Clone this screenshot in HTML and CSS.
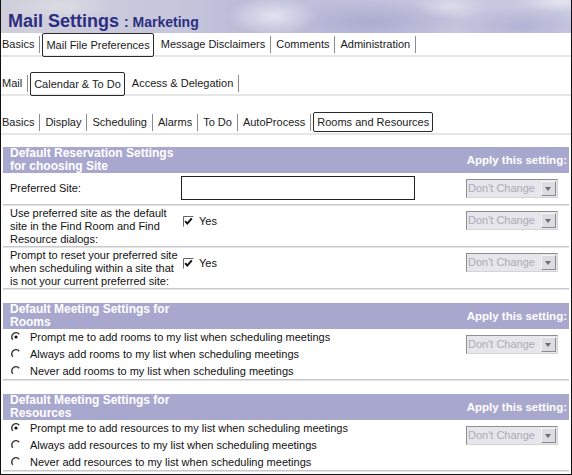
FILE: index.html
```html
<!DOCTYPE html>
<html lang="en-us">
<head>
    <meta charset="UTF-8">
    <meta name="viewport" content="width=device-width, initial-scale=1.0">
    <title>Mail Settings : Marketing</title>
    <link rel="stylesheet" href="styles.css">
</head>
<body>
<div class="page">
    <header class="banner">
        <h1>Mail Settings <span class="banner-sub">: Marketing</span></h1>
    </header>

    <nav class="tabs tabs-top">
        <a class="tab first">Basics</a>
        <a class="tab active">Mail File Preferences</a>
        <a class="tab">Message Disclaimers</a>
        <a class="tab">Comments</a>
        <a class="tab">Administration</a>
    </nav>

    <nav class="tabs tabs-mid">
        <a class="tab first">Mail</a>
        <a class="tab active">Calendar &amp; To Do</a>
        <a class="tab">Access &amp; Delegation</a>
    </nav>

    <nav class="tabs tabs-sub">
        <a class="tab first">Basics</a>
        <a class="tab">Display</a>
        <a class="tab">Scheduling</a>
        <a class="tab">Alarms</a>
        <a class="tab">To Do</a>
        <a class="tab">AutoProcess</a>
        <a class="tab active">Rooms and Resources</a>
    </nav>

    <!-- reservation settings -->
    <section class="group group-first">
        <div class="group-head">
            <h2>Default Reservation Settings for choosing Site</h2>
            <span class="apply-title">Apply this setting:</span>
        </div>

        <div class="row row-site">
            <div class="label">Preferred Site:</div>
            <div class="value"><input class="text-input" type="text"></div>
            <div class="apply"><div class="dropdown"><span>Don't Change</span><i class="dropdown-btn"></i></div></div>
        </div>

        <div class="row">
            <div class="label">Use preferred site as the default site in the Find Room and Find Resource dialogs:</div>
            <div class="value value-check">
                <svg class="check" width="11" height="11" viewBox="0 0 11 11"><path d="M0.5 10.5V0.5H10.5" fill="none" stroke="#666" stroke-width="1"/><path d="M2.2 5.2L4.3 7.6L8.8 2.4" fill="none" stroke="#111" stroke-width="2"/></svg>
                Yes
            </div>
            <div class="apply"><div class="dropdown"><span>Don't Change</span><i class="dropdown-btn"></i></div></div>
        </div>

        <div class="row">
            <div class="label">Prompt to reset your preferred site when scheduling within a site that is not your current preferred site:</div>
            <div class="value value-check">
                <svg class="check" width="11" height="11" viewBox="0 0 11 11"><path d="M0.5 10.5V0.5H10.5" fill="none" stroke="#666" stroke-width="1"/><path d="M2.2 5.2L4.3 7.6L8.8 2.4" fill="none" stroke="#111" stroke-width="2"/></svg>
                Yes
            </div>
            <div class="apply"><div class="dropdown"><span>Don't Change</span><i class="dropdown-btn"></i></div></div>
        </div>
    </section>

    <!-- rooms -->
    <section class="group">
        <div class="group-head">
            <h2>Default Meeting Settings for Rooms</h2>
            <span class="apply-title">Apply this setting:</span>
        </div>
        <div class="row row-radios">
            <div class="radios">
                <div class="radio checked"><svg width="10" height="10" viewBox="0 0 10 10"><path d="M8.2 2.2A4.2 4.2 0 0 0 1.8 7.8" fill="none" stroke="#333" stroke-width="1.4"/><circle cx="5" cy="5" r="1.6" fill="#111"/></svg>Prompt me to add rooms to my list when scheduling meetings</div>
                <div class="radio"><svg width="10" height="10" viewBox="0 0 10 10"><path d="M8.2 2.2A4.2 4.2 0 0 0 1.8 7.8" fill="none" stroke="#333" stroke-width="1.4"/></svg>Always add rooms to my list when scheduling meetings</div>
                <div class="radio"><svg width="10" height="10" viewBox="0 0 10 10"><path d="M8.2 2.2A4.2 4.2 0 0 0 1.8 7.8" fill="none" stroke="#333" stroke-width="1.4"/></svg>Never add rooms to my list when scheduling meetings</div>
            </div>
            <div class="apply"><div class="dropdown"><span>Don't Change</span><i class="dropdown-btn"></i></div></div>
        </div>
    </section>

    <!-- resources -->
    <section class="group">
        <div class="group-head">
            <h2>Default Meeting Settings for Resources</h2>
            <span class="apply-title">Apply this setting:</span>
        </div>
        <div class="row row-radios">
            <div class="radios">
                <div class="radio checked"><svg width="10" height="10" viewBox="0 0 10 10"><path d="M8.2 2.2A4.2 4.2 0 0 0 1.8 7.8" fill="none" stroke="#333" stroke-width="1.4"/><circle cx="5" cy="5" r="1.6" fill="#111"/></svg>Prompt me to add resources to my list when scheduling meetings</div>
                <div class="radio"><svg width="10" height="10" viewBox="0 0 10 10"><path d="M8.2 2.2A4.2 4.2 0 0 0 1.8 7.8" fill="none" stroke="#333" stroke-width="1.4"/></svg>Always add resources to my list when scheduling meetings</div>
                <div class="radio"><svg width="10" height="10" viewBox="0 0 10 10"><path d="M8.2 2.2A4.2 4.2 0 0 0 1.8 7.8" fill="none" stroke="#333" stroke-width="1.4"/></svg>Never add resources to my list when scheduling meetings</div>
            </div>
            <div class="apply"><div class="dropdown"><span>Don't Change</span><i class="dropdown-btn"></i></div></div>
        </div>
    </section>
</div>
</body>
</html>
```

FILE: styles.css
```css
html, body {
    margin: 0;
    padding: 0;
    background: #fff;
}

body {
    font-family: "Liberation Sans", Arial, sans-serif;
    font-size: 11px;
    color: #111;
}

.page {
    width: 570px;
    height: 474px;
    border: 1px solid #111;
    border-top: none;
    overflow: hidden;
}

/* banner */
.banner {
    height: 33px;
    background-color: #c8c8de;
    background-image:
        radial-gradient(ellipse 60px 26px at 272px 16px, #e2e2ef, rgba(226,226,239,0) 75%),
        radial-gradient(ellipse 120px 30px at 370px 22px, #acacd1, rgba(172,172,209,0) 75%),
        radial-gradient(ellipse 50px 18px at 450px 6px, #dcdcec, rgba(220,220,236,0) 75%),
        radial-gradient(ellipse 90px 26px at 520px 26px, #b2b2d5, rgba(178,178,213,0) 75%),
        radial-gradient(ellipse 60px 14px at 560px 2px, #e4e4f0, rgba(228,228,240,0) 75%),
        radial-gradient(ellipse 70px 20px at 60px 6px, #dcdce4, rgba(220,220,228,0) 75%),
        linear-gradient(90deg, #d0d0dc 0%, #c6c6dc 30%, #bcbcd8 42%, #cacae0 100%);
}

.banner h1 {
    margin: 0;
    padding: 11px 0 0 7px;
    font-size: 18px;
    line-height: 20px;
    color: #2c2f80;
    font-weight: bold;
}

.banner-sub {
    font-size: 14px;
}

/* tabs */
.tabs {
    display: flex;
    align-items: center;
    height: 22px;
    border-bottom: 2px solid #e6e6e6;
}

.tabs-mid,
.tabs-sub {
    margin-top: 15px;
}

.tab {
    padding: 0 5px;
    line-height: 17px;
    border-right: 1px solid #8a8a8a;
    color: #1a1a1a;
    white-space: nowrap;
}

.tab.first {
    padding-left: 1px;
}

.tab.active {
    align-self: flex-start;
    height: 22px;
    line-height: 22px;
    padding: 0 3px;
    margin: 0 2px;
    border: 1.5px solid #2a2a2a;
    border-radius: 2px;
}

.tabs-sub .tab.active {
    height: 18px;
    line-height: 18px;
    margin-top: 1px;
}

/* groups */
.group {
    margin: 14px 2px 0 2px;
}

.group-first {
    margin-top: 12px;
}

.group-head {
    display: flex;
    align-items: center;
    justify-content: space-between;
    height: 26px;
    background: #a8a8cf;
    color: #fff;
}

.group-head h2 {
    margin: 0;
    width: 168px;
    padding-left: 7px;
    font-size: 12px;
    line-height: 13px;
    font-weight: bold;
}

.apply-title {
    font-size: 11.5px;
    font-weight: bold;
    padding-right: 2px;
}

.row {
    display: grid;
    grid-template-columns: 177px 285px 1fr;
    padding-top: 2px;
    border-bottom: 1px solid #c8c8c8;
    box-shadow: 0 1px 0 #e4e4e4;
}

.label {
    padding-left: 7px;
    line-height: 13px;
    height: 39px;
}

.row-site .label {
    height: auto;
    padding-top: 7px;
}

.value-check {
    display: flex;
    align-items: center;
    gap: 5px;
    padding-left: 3px;
    padding-top: 8px;
    align-self: start;
    font-size: 11px;
}

.text-input {
    display: block;
    box-sizing: border-box;
    width: 234px;
    height: 24px;
    margin: 1px 0 4px 1px;
    border: 1.5px solid #222;
    background: #fff;
}

.apply {
    padding-top: 4px;
    padding-left: 1px;
}

/* disabled drop-down */
.dropdown {
    display: flex;
    box-sizing: border-box;
    width: 92px;
    height: 19px;
    border: 1px solid;
    border-color: #8e8e8e #d4d4d4 #d4d4d4 #8e8e8e;
    background: #e6e6ec;
    color: #acacb4;
    font-size: 11px;
}

.dropdown span {
    flex: 1;
    line-height: 17px;
    padding-left: 1px;
    white-space: nowrap;
}

.dropdown-btn {
    position: relative;
    width: 15px;
    margin: 1px;
    box-sizing: border-box;
    border: 1px solid;
    border-color: #f4f4f4 #8c8c8c #8c8c8c #f4f4f4;
    background: #dcdce2;
}

.dropdown-btn::after {
    content: "";
    position: absolute;
    left: 3px;
    top: 5px;
    border-left: 3.5px solid transparent;
    border-right: 3.5px solid transparent;
    border-top: 4px solid #6c6c6c;
}

/* radios */
.row-radios {
    padding-top: 0;
}

.radios {
    grid-column: 1 / 3;
}

.radio {
    display: flex;
    align-items: center;
    height: 16.7px;
    padding-left: 8px;
    white-space: nowrap;
}

.radio svg {
    margin-right: 9px;
}

.row-radios .apply {
    padding-top: 6px;
}
```
